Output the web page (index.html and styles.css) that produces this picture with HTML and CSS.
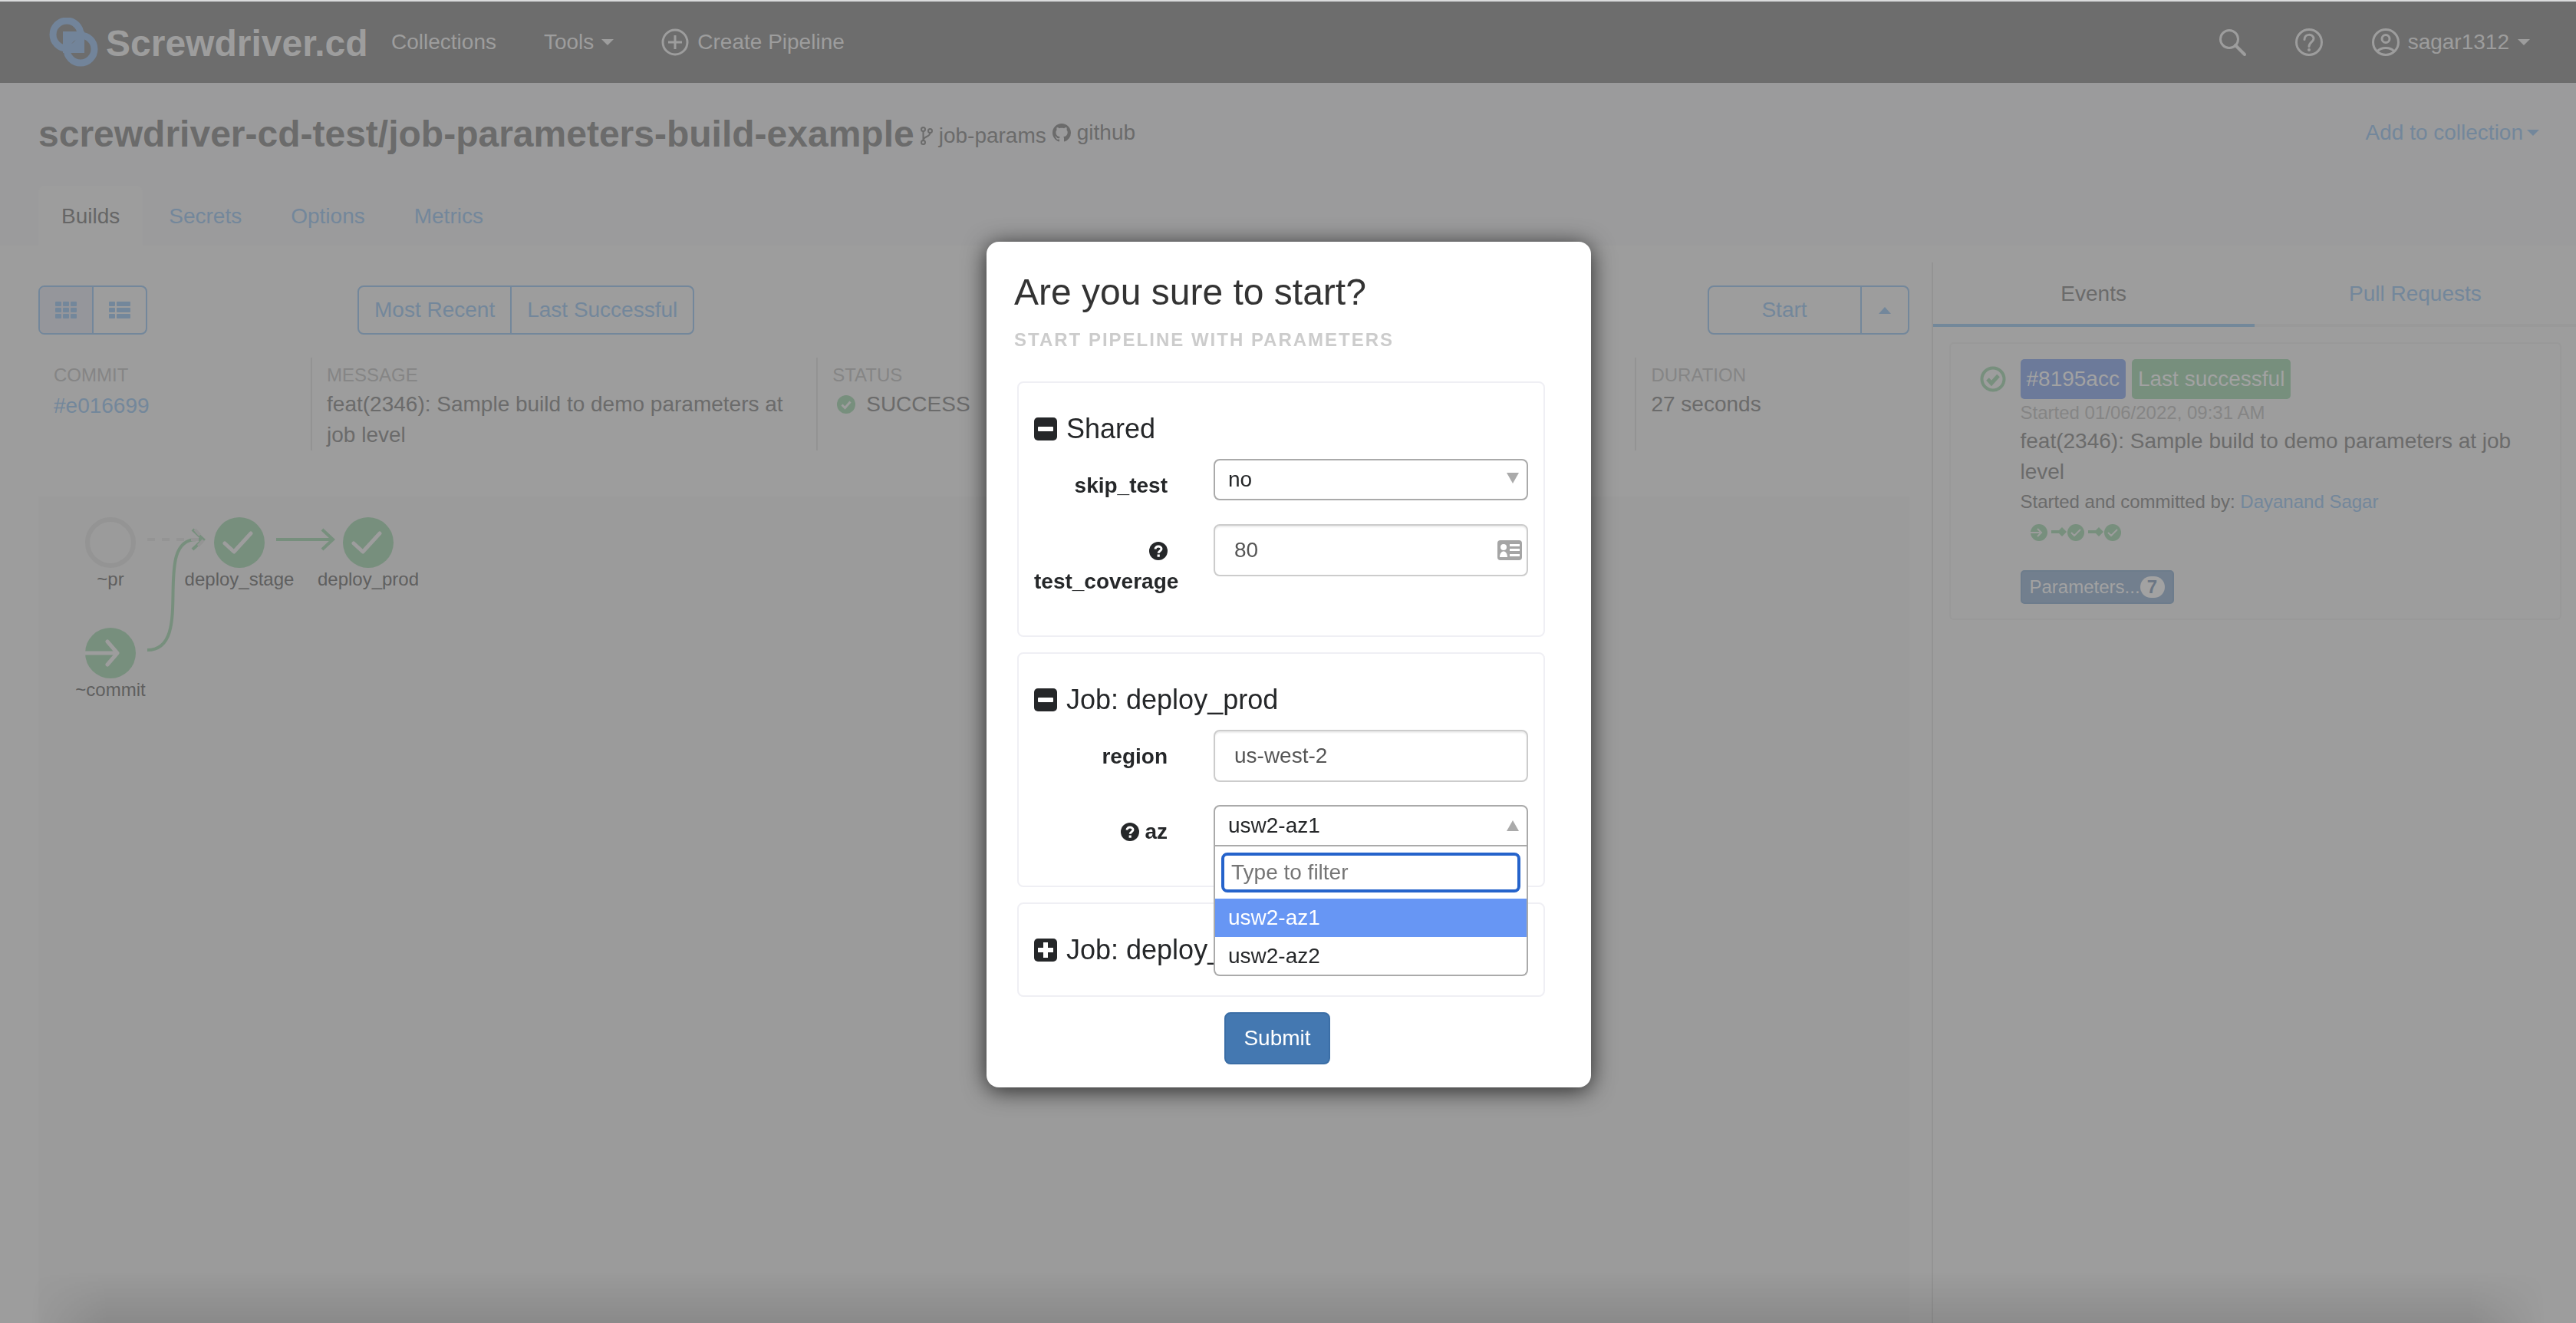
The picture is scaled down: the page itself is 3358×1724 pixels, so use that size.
FILE: index.html
```html
<!DOCTYPE html>
<html lang="en">
<head>
<meta charset="utf-8">
<title>screwdriver-cd-test/job-parameters-build-example</title>
<link rel="stylesheet" href="styles.css">
</head>
<body>
<svg class="sprite" aria-hidden="true">
  <symbol id="i-check" viewBox="0 0 24 24"><circle cx="12" cy="12" r="12" fill="#778f7d"/><path d="M6.500 12.500l4 4 7-8" fill="none" stroke="#9d9d9d" stroke-width="3"/></symbol>
  <symbol id="i-question" viewBox="0 0 24 24"><circle cx="12" cy="12" r="12" fill="#252729"/><path d="M8 9.500C8 5 16 5 16 9.300c0 2.700-3.800 2.700-3.800 5.500" fill="none" stroke="#fff" stroke-width="3"/><rect x="10.600" y="16.500" width="3.200" height="3.200" fill="#fff"/></symbol>
  <symbol id="i-minus" viewBox="0 0 30 30"><rect width="30" height="30" rx="5" fill="#252729"/><rect x="5" y="12" width="20" height="6" rx="1" fill="#fff"/></symbol>
  <symbol id="i-plus" viewBox="0 0 30 30"><rect width="30" height="30" rx="5" fill="#252729"/><path d="M5 12h7V5h6v7h7v6h-7v7h-6v-7H5z" fill="#fff"/></symbol>
</svg>

<header class="navbar">
  <a class="brand" href="#">
    <svg width="64" height="64" viewBox="0 0 64 64" fill="none" stroke="#72849a" stroke-width="9"><circle cx="23" cy="22" r="18"/><circle cx="41" cy="41" r="18"/><rect x="22.500" y="22.500" width="19" height="19"/></svg>
    <span>Screwdriver.cd</span>
  </a>
  <nav class="nav-left">
    <a href="#">Collections</a>
    <a href="#">Tools <i class="caret"></i></a>
    <a href="#" class="create"><svg width="36" height="36" viewBox="0 0 36 36" fill="none" stroke="#9d9d9d" stroke-width="3"><circle cx="18" cy="18" r="16"/><path d="M18 9v18M9 18h18"/></svg>Create Pipeline</a>
  </nav>
  <nav class="nav-right">
    <a href="#" aria-label="Search"><svg width="36" height="36" viewBox="0 0 36 36" fill="none" stroke="#9d9d9d" stroke-width="3" stroke-linecap="round"><circle cx="14" cy="14" r="11.500"/><path d="M22 22l12 12" stroke-width="4"/></svg></a>
    <a href="#" aria-label="Help"><svg width="36" height="36" viewBox="0 0 36 36" fill="none" stroke="#9d9d9d" stroke-width="3"><circle cx="18" cy="18" r="16.500"/><path d="M12 14.500C12 6.500 24 6.500 24 13.500c0 4-6 4.500-6 10" stroke-linecap="round"/><circle cx="18" cy="28" r="2" fill="#9d9d9d" stroke="none"/></svg></a>
    <a href="#" class="user"><svg width="36" height="36" viewBox="0 0 36 36" fill="none" stroke="#9d9d9d" stroke-width="3"><circle cx="18" cy="18" r="16.500"/><circle cx="18" cy="13.500" r="5"/><path d="M7 30c5-6 17-6 22 0"/></svg>sagar1312 <i class="caret"></i></a>
  </nav>
</header>

<section class="pipeline-header">
  <div class="title-row">
    <h1>screwdriver-cd-test/job-parameters-build-example</h1>
    <a href="#" class="branch"><svg width="16" height="24" viewBox="0 0 16 24" fill="none" stroke="#6b6b6b" stroke-width="2"><circle cx="3.500" cy="3.500" r="2.500"/><circle cx="3.500" cy="20.500" r="2.500"/><circle cx="12.500" cy="5.500" r="2.500"/><path d="M3.500 6v12M12.500 8c0 6-9 4-9 10"/></svg>job-params</a>
    <a href="#" class="scm"><svg width="24" height="24" viewBox="0 0 16 16" fill="#6b6b6b"><path d="M8 0C3.580 0 0 3.580 0 8c0 3.540 2.290 6.530 5.470 7.590.400.070.550-.170.550-.380 0-.190-.010-.820-.010-1.490-2.010.370-2.530-.490-2.690-.940-.090-.230-.480-.940-.820-1.130-.280-.150-.680-.520-.010-.530.630-.010 1.080.580 1.230.820.720 1.210 1.870.870 2.330.660.070-.520.280-.870.510-1.070-1.780-.200-3.640-.890-3.640-3.950 0-.870.310-1.590.820-2.150-.080-.200-.360-1.020.080-2.120 0 0 .670-.210 2.200.820.640-.180 1.320-.270 2-.270s1.360.090 2 .270c1.530-1.040 2.200-.820 2.200-.820.440 1.100.160 1.920.080 2.120.510.560.820 1.270.820 2.150 0 3.070-1.870 3.750-3.650 3.950.290.250.540.730.540 1.480 0 1.070-.010 1.930-.010 2.200 0 .210.150.460.550.380A8 8 0 0 0 16 8c0-4.420-3.580-8-8-8z"/></svg>github</a>
    <a href="#" class="add">Add to collection<i class="caret"></i></a>
  </div>
  <nav class="tabs">
    <a href="#" class="active">Builds</a><a href="#">Secrets</a><a href="#">Options</a><a href="#">Metrics</a>
  </nav>
</section>

<div class="content">
  <main class="builds">
    <div class="toolbar">
      <div class="btn-group">
        <button class="icon-btn on" aria-label="Graph view"><svg width="28" height="22" viewBox="0 0 28 22" fill="#73879b"><g id="cells"><rect width="8" height="6" rx="1"/><rect y="8" width="8" height="6" rx="1"/><rect y="16" width="8" height="6" rx="1"/></g><use href="#cells" x="10"/><use href="#cells" x="20"/></svg></button>
        <button class="icon-btn" aria-label="List view"><svg width="28" height="22" viewBox="0 0 28 22" fill="#73879b"><use href="#cells"/><rect x="10" width="18" height="6" rx="1"/><rect x="10" y="8" width="18" height="6" rx="1"/><rect x="10" y="16" width="18" height="6" rx="1"/></svg></button>
      </div>
      <div class="btn-group recent"><button>Most Recent</button><button>Last Successful</button></div>
      <div class="btn-group start"><button class="start-btn">Start</button><button class="drop-btn" aria-label="More start options"><i class="caret up"></i></button></div>
    </div>
    <dl class="summary">
      <div><dt>COMMIT</dt><dd class="sha"><a href="#">#e016699</a></dd></div>
      <div><dt>MESSAGE</dt><dd>feat(2346): Sample build to demo parameters at job level</dd></div>
      <div><dt>STATUS</dt><dd class="status"><svg width="24" height="24"><use href="#i-check"/></svg>SUCCESS</dd></div>
      <div><dt>DURATION</dt><dd>27 seconds</dd></div>
    </dl>
    <div class="graph">
      <svg width="520" height="300" viewBox="0 0 520 300" role="img" aria-label="Workflow graph">
        <g fill="none" stroke="#778f7d" stroke-width="4">
          <path d="M142 200C206 200 146 56 206 56h8M201 43l14 13-14 13"/>
          <path d="M310 56h74M370 43l14 13-14 13"/>
        </g>
        <path d="M142 56h74M204 43l12 13-12 13" fill="none" stroke="#949494" stroke-width="4" stroke-dasharray="10 9"/>
        <circle cx="94" cy="60" r="30" fill="none" stroke="#949494" stroke-width="6"/>
        <g fill="#778f7d"><circle cx="262" cy="60" r="33"/><circle cx="430" cy="60" r="33"/><circle cx="94" cy="204" r="33"/></g>
        <g fill="none" stroke="#9d9d9d" stroke-width="5" stroke-linecap="round" stroke-linejoin="round">
          <path d="M243 61l12 11 22-24M411 61l12 11 22-24M90 189l13 15-13 15"/><path d="M61 204h40" stroke-linecap="butt"/>
        </g>
        <g class="node-label"><text x="94" y="116">~pr</text><text x="262" y="116">deploy_stage</text><text x="430" y="116">deploy_prod</text><text x="94" y="260">~commit</text></g>
      </svg>
    </div>
  </main>

  <aside class="sidebar">
    <nav class="side-tabs"><a href="#" class="active">Events</a><a href="#">Pull Requests</a></nav>
    <article class="event">
      <svg class="event-icon" width="34" height="34" viewBox="0 0 34 34" fill="none" stroke="#778f7d"><circle cx="17" cy="17" r="14.500" stroke-width="4"/><path d="M10 17l5 5.500 9-10" stroke-width="5"/></svg>
      <div class="event-body">
        <div class="badges"><a href="#" class="badge sha-badge">#8195acc</a><span class="badge ok">Last successful</span></div>
        <p class="small muted">Started 01/06/2022, 09:31 AM</p>
        <p class="msg">feat(2346): Sample build to demo parameters at job level</p>
        <p class="small by">Started and committed by: <a href="#">Dayanand Sagar</a></p>
        <svg class="mini" width="144" height="24" viewBox="0 0 144 24" role="img" aria-label="Event workflow"><g fill="#778f7d"><circle cx="24" cy="12" r="11"/><circle cx="72" cy="12" r="11"/><circle cx="120" cy="12" r="11"/><path d="M40 9h10l4-4 6 6-6 6-4-4H40zM88 9h10l4-4 6 6-6 6-4-4H88z"/></g><path d="M13 12h12M22 7l5 5-5 5M66 12l4 4 8-8M114 12l4 4 8-8" fill="none" stroke="#9d9d9d" stroke-width="2"/></svg>
        <button class="params">Parameters...<span>7</span></button>
      </div>
    </article>
  </aside>
</div>
<div class="page-shade"></div>

<div class="modal-wrap">
  <div class="modal" role="dialog" aria-labelledby="dlg-title">
    <h2 id="dlg-title">Are you sure to start?</h2>
    <p class="subtitle">START PIPELINE WITH PARAMETERS</p>
    <form>
      <section class="group">
        <h3><svg width="30" height="30"><use href="#i-minus"/></svg>Shared</h3>
        <div class="row"><label for="skip">skip_test</label>
          <div class="control select"><select id="skip"><option>no</option><option>yes</option></select><i class="arrow down"></i></div></div>
        <div class="row"><label for="cov"><svg width="24" height="24"><use href="#i-question"/></svg> test_coverage</label>
          <div class="control"><input id="cov" type="text" value="80"><svg class="contact" width="32" height="26" viewBox="0 0 32 26"><rect width="32" height="26" rx="4" fill="#a5a5a5"/><circle cx="8" cy="9" r="4" fill="#fff"/><path d="M3 22c0-10 10-10 10 0zM16 5h13v3H16zM16 11h13v3H16zM16 18h13v3H16z" fill="#fff"/></svg></div></div>
      </section>
      <section class="group">
        <h3><svg width="30" height="30"><use href="#i-minus"/></svg>Job: deploy_prod</h3>
        <div class="row"><label for="region">region</label><div class="control"><input id="region" type="text" value="us-west-2"></div></div>
        <div class="row"><label for="az"><svg width="24" height="24"><use href="#i-question"/></svg> az</label>
          <div class="control select open"><select id="az"><option>usw2-az1</option><option>usw2-az2</option></select><i class="arrow"></i>
            <div class="menu"><input type="text" placeholder="Type to filter" aria-label="Filter options">
              <ul role="listbox"><li role="option" class="current">usw2-az1</li><li role="option">usw2-az2</li></ul></div></div></div>
      </section>
      <section class="group closed">
        <h3><svg width="30" height="30"><use href="#i-plus"/></svg>Job: deploy_stage</h3>
      </section>
      <div class="actions"><button type="submit">Submit</button></div>
    </form>
  </div>
</div>
</body>
</html>
```
FILE: styles.css
```css
* { box-sizing: border-box; }
body, h1, h2, h3, p, dl, dd, ul { margin: 0; padding: 0; }
body {
  min-height: 100vh;
  display: flex;
  flex-direction: column;
  background: #9d9d9d;
  color: #6b6b6b;
  font: 28px/40px "Liberation Sans", Arial, sans-serif;
}
a { color: #73879b; text-decoration: none; }
button, input, select { font: inherit; color: inherit; }
svg { flex: none; }
.sprite { position: absolute; width: 0; height: 0; }
.caret {
  display: inline-block;
  border: 8px solid transparent;
  border-top-color: currentColor;
  border-bottom: 0;
  vertical-align: middle;
}
.caret.up { border-top: 0; border-bottom: 9px solid currentColor; }

/* top bar */
.navbar {
  display: flex;
  align-items: center;
  height: 108px;
  padding: 0 60px 0 64px;
  border-top: 2px solid #dadbdc;
  background: #6d6d6d;
}
.navbar a { display: flex; align-items: center; color: #9d9d9d; }
.brand { gap: 10px; width: 446px; font-size: 48px; font-weight: bold; }
.brand span { padding-top: 4px; }
.nav-left { display: flex; gap: 62px; }
.nav-left .caret { margin-left: 10px; }
.nav-left .create { gap: 11px; }
.nav-right { display: flex; gap: 64px; margin-left: auto; }
.user { gap: 11px; }

/* pipeline heading */
.pipeline-header { height: 212px; padding: 42px 48px 0 50px; background: #9b9b9c; }
.title-row { display: flex; align-items: center; height: 50px; margin-bottom: 42px; }
.title-row a { display: flex; align-items: center; }
h1 { margin-right: 8px; font-size: 48px; line-height: 50px; }
.title-row .branch { gap: 8px; margin-right: 8px; padding-top: 4px; color: inherit; }
.title-row .scm { gap: 8px; padding-bottom: 4px; color: inherit; }
.title-row .add { gap: 5px; margin-left: auto; padding-bottom: 4px; }
.tabs { display: flex; gap: 4px; }
.tabs a { height: 78px; padding: 20px 30px; border-radius: 8px 8px 0 0; }
.tabs .active { background: #9d9d9d; color: #666; }

/* builds area */
.content { display: grid; grid-template-columns: 3fr 1fr; flex: 1; }
.builds { display: flex; flex-direction: column; padding: 52px 30px 0 50px; }
.toolbar { display: flex; align-items: center; margin-bottom: 30px; }
.btn-group { display: flex; border: 2px solid #73879b; border-radius: 8px; }
.btn-group button {
  display: flex;
  align-items: center;
  justify-content: center;
  height: 60px;
  padding: 0 20px;
  border: 0;
  background: none;
  color: #73879b;
}
.btn-group button + button { border-left: 2px solid #73879b; }
.icon-btn.on { background: #95969b; border-radius: 6px 0 0 6px; }
.recent { margin-left: 274px; }
.start { margin-left: auto; }
.btn-group .start-btn { width: 197px; }
.btn-group .drop-btn { width: 62px; }
.summary { display: grid; grid-template-columns: 355fr 659fr 1067fr 357fr; margin-bottom: 60px; }
.summary > div { min-height: 120px; padding: 10px 20px 0; }
.summary > div + div { padding-left: 19px; border-left: 2px solid #939393; }
dt { margin-top: -2px; margin-bottom: 3px; font-size: 24px; line-height: 30px; color: #858585; }
.sha { padding-top: 2px; }
.status { display: flex; align-items: center; gap: 14px; padding-left: 6px; }
.graph { flex: 1; background: #9b9b9b; }
.node-label { font-size: 24px; text-anchor: middle; fill: #5f5f5f; }

/* events sidebar */
.sidebar { margin-top: 22px; margin-left: -1px; border-left: 2px solid #939393; }
.side-tabs { display: flex; margin-bottom: 20px; }
.side-tabs a { flex: 1; height: 84px; padding-top: 21px; border-bottom: 4px solid #999; text-align: center; }
.side-tabs .active { border-color: #73889a; color: #6b6b6b; }
.event {
  display: flex;
  gap: 19px;
  margin: 0 19px 0 21px;
  padding: 20px 38px 19px;
  border: 2px solid #999;
  border-radius: 6px;
}
.event-icon { margin-top: 9px; }
.event-body { flex: 1; }
.badges { display: flex; gap: 8px; margin-bottom: 3px; }
.badge { height: 52px; padding: 6px 8px; border-radius: 5px; color: #a2a2a2; background: #6c7a9a; }
.badge.ok { background: #778f7d; }
.small { font-size: 24px; line-height: 30px; }
.muted { color: #858585; }
.msg { max-width: 640px; padding-top: 2px; }
.by { margin: 4px 0 13px; }
.mini { display: block; margin-bottom: 37px; }
.params {
  display: flex;
  align-items: center;
  height: 44px;
  padding: 0 10px;
  border: 2px solid #6d7c8c;
  border-radius: 5px;
  background: #727f8e;
  color: #a2a2a2;
  font-size: 24px;
}
.params span {
  width: 32px;
  height: 28px;
  border-radius: 14px;
  background: #a2a2a2;
  color: #6b7684;
  font-weight: bold;
  line-height: 28px;
  text-align: center;
}
.page-shade {
  position: fixed;
  inset: auto 40px 0 40px;
  height: 66px;
  background: linear-gradient(transparent, rgba(0, 0, 0, .11));
  -webkit-mask-image: linear-gradient(to right, transparent, #000 100px calc(100% - 100px), transparent);
  mask-image: linear-gradient(to right, transparent, #000 100px calc(100% - 100px), transparent);
}

/* start dialog */
.modal-wrap {
  position: fixed;
  inset: 0;
  display: flex;
  align-items: flex-start;
  justify-content: center;
  padding: 315px 0 0 2px;
}
.modal {
  width: 788px;
  padding: 39px 60px 30px 36px;
  border-radius: 16px;
  background: #fff;
  color: #252729;
  box-shadow: 0 4px 30px rgba(0, 0, 0, .75);
}
h2 { margin-bottom: 21px; color: #333; font-size: 48px; font-weight: normal; line-height: 54px; }
.subtitle { margin-bottom: 40px; color: #ccc; font-size: 24px; font-weight: bold; line-height: 28px; letter-spacing: 2px; }
form { display: flex; flex-direction: column; gap: 20px; padding-left: 4px; }
.group { padding: 20px; border: 2px solid #efeff4; border-radius: 8px; }
h3 { display: flex; align-items: center; gap: 12px; margin: 20px 0; font-size: 36px; font-weight: normal; line-height: 39px; }
.row { display: grid; grid-template-columns: 174px 1fr; gap: 60px; margin-bottom: 30px; }
.row label { padding-top: 15px; font-weight: bold; text-align: right; }
.row label svg { vertical-align: -3px; }
.control { position: relative; }
.control > input {
  width: 100%;
  height: 68px;
  padding: 0 25px;
  border: 2px solid #ccc;
  border-radius: 8px;
  background: #fff;
  box-shadow: inset 0 2px 2px rgba(0, 0, 0, .08);
  color: #555;
}
.contact { position: absolute; top: 21px; right: 8px; }
.select select {
  display: block;
  width: 100%;
  height: 54px;
  padding: 0 17px;
  border: 2px solid #aaa;
  border-radius: 8px;
  background: #fff;
  appearance: none;
}
.arrow {
  position: absolute;
  top: 20px;
  right: 12px;
  border: 8px solid transparent;
  border-top: 0;
  border-bottom: 14px solid #aaa;
}
.arrow.down { top: 18px; border-top: 14px solid #aaa; border-bottom: 0; }
.open select { border-radius: 8px 8px 0 0; }
.menu {
  position: absolute;
  top: 54px;
  left: 0;
  right: 0;
  border: 2px solid #aaa;
  border-top: 0;
  border-radius: 0 0 8px 8px;
  background: #fff;
}
.menu input {
  display: block;
  width: calc(100% - 16px);
  height: 52px;
  margin: 8px;
  padding: 0 9px;
  border: 4px solid #2563cb;
  border-radius: 8px;
  outline: 0;
}
.menu input::placeholder { color: #757575; }
.menu ul { list-style: none; }
.menu li { height: 49px; padding: 5px 17px; }
.menu .current { height: 50px; background: #6796f4; color: #fff; }
.actions { display: flex; justify-content: center; padding-right: 10px; }
.actions button {
  width: 138px;
  height: 68px;
  border: 2px solid #3b6ea6;
  border-radius: 8px;
  background: #4478b1;
  color: #fff;
}
```
